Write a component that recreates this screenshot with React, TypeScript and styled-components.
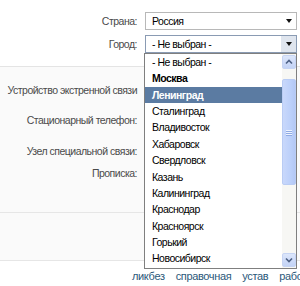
import React from "react";
import styled, { createGlobalStyle } from "styled-components";

const FONT = `Tahoma, "Liberation Sans", Arial, sans-serif`;

const Global = createGlobalStyle`
  html, body { margin: 0; padding: 0; background: #fff; }
  body { font-family: ${FONT}; }
`;

const Page = styled.div`
  position: relative;
  width: 300px;
  height: 286px;
  overflow: hidden;
  background: #fff;
  font-family: ${FONT};
  font-size: 10.5px;
  letter-spacing: -0.5px;
`;

const Top = styled.div`
  display: flex;
  flex-direction: column;
  gap: 5px;
  padding-top: 12px;
  height: 67px;
  box-sizing: border-box;
  border-bottom: 1px solid #e4e4e4;
`;

const Row = styled.div<{ $h?: number; $mt?: number }>`
  display: grid;
  grid-template-columns: 137px 152px;
  column-gap: 8px;
  align-items: center;
  height: ${(p) => (p.$h ? `${p.$h}px` : "auto")};
  margin-top: ${(p) => p.$mt ?? 0}px;
`;

const Label = styled.div`
  text-align: right;
  color: #4a4a4a;
  white-space: nowrap;
`;

const Select = styled.div<{ $open?: boolean }>`
  height: 18px;
  box-sizing: border-box;
  border: 1px solid ${(p) => (p.$open ? "#8a9bb3" : "#b8b8b8")};
  background: #fff;
  display: flex;
  align-items: center;
  justify-content: space-between;
  padding-left: 6px;
  color: #000;
`;

const Arrow = styled.div<{ $btn?: boolean }>`
  width: 15px;
  align-self: stretch;
  display: flex;
  align-items: center;
  justify-content: center;
  background: ${(p) => (p.$btn ? "#dfe5ee" : "transparent")};
  &::after {
    content: "";
    border-left: 3.5px solid transparent;
    border-right: 3.5px solid transparent;
    border-top: 4px solid #111;
  }
`;

const Lower = styled.div`
  background: #fafafa;
  display: flex;
  flex-direction: column;
`;

const Section = styled.div<{ $h: number; $line?: boolean }>`
  height: ${(p) => p.$h}px;
  box-sizing: border-box;
  border-bottom: ${(p) => (p.$line ? "1px solid #e6e6e6" : "none")};
  display: flex;
  flex-direction: column;
`;

const Footer = styled.div`
  background: #fff;
  height: 25px;
  display: flex;
  gap: 11px;
  padding-left: 132px;
  padding-top: 9px;
  box-sizing: border-box;
  white-space: nowrap;
  font-size: 11px;
  letter-spacing: -0.35px;
`;

const Link = styled.span`
  color: #2b587a;
`;

const List = styled.div`
  position: absolute;
  left: 144px;
  top: 53px;
  width: 153px;
  height: 216px;
  box-sizing: border-box;
  border: 1px solid #7f7f7f;
  background: #fff;
  display: flex;
`;

const Items = styled.div`
  flex: 1;
  display: flex;
  flex-direction: column;
`;

const Item = styled.div<{ $sel?: boolean; $bold?: boolean }>`
  height: 16.36px;
  line-height: 16.36px;
  padding-left: 7px;
  color: ${(p) => (p.$sel ? "#fff" : "#000")};
  background: ${(p) => (p.$sel ? "#5b7ba2" : "transparent")};
  font-weight: ${(p) => (p.$sel || p.$bold ? "bold" : "normal")};
  white-space: nowrap;
`;

const Scroll = styled.div`
  width: 14px;
  background: #f7f7f4;
  display: flex;
  flex-direction: column;
  align-items: stretch;
  padding: 1px 0;
  gap: 1px;
  box-sizing: border-box;
`;

const ScrollBtn = styled.div`
  height: 14px;
  border-radius: 2px;
  background: linear-gradient(#dce6fb, #c3d3f6);
  border: 1px solid #c6d4f3;
  box-sizing: border-box;
  display: flex;
  align-items: center;
  justify-content: center;
  svg { display: block; }
`;

const Track = styled.div`
  flex: 1;
  display: flex;
  flex-direction: column;
  padding-top: 9px;
`;

const Thumb = styled.div`
  height: 106px;
  border-radius: 2px;
  border: 1px solid #b9ccf4;
  background: linear-gradient(90deg, #c9d8fb, #bcd0fa 60%, #b4c8f5);
  box-sizing: border-box;
  display: flex;
  flex-direction: column;
  align-items: center;
  justify-content: center;
  gap: 1px;
`;

const Grip = styled.div`
  width: 6px;
  height: 1px;
  background: #eef3fe;
  box-shadow: 0 1px 0 #8faae4;
`;

const Chevron = ({ down }: { down?: boolean }) => (
  <svg width="8" height="6" viewBox="0 0 8 6">
    <path
      d={down ? "M1 1.5 L4 4.5 L7 1.5" : "M1 4.5 L4 1.5 L7 4.5"}
      stroke="#4d6185"
      strokeWidth="1.6"
      fill="none"
    />
  </svg>
);

const cities = [
  "- Не выбран -",
  "Москва",
  "Ленинград",
  "Сталинград",
  "Владивосток",
  "Хабаровск",
  "Свердловск",
  "Казань",
  "Калининград",
  "Краснодар",
  "Красноярск",
  "Горький",
  "Новосибирск",
];

export default function App() {
  return (
    <>
      <Global />
      <Page>
        <Top>
          <Row>
            <Label>Страна:</Label>
            <Select>
              Россия
              <Arrow />
            </Select>
          </Row>
          <Row>
            <Label>Город:</Label>
            <Select $open>
              - Не выбран -
              <Arrow $btn />
            </Select>
          </Row>
        </Top>
        <Lower>
          <Section $h={146} $line>
            <Row $h={18} $mt={14}>
              <Label>Устройство экстренной связи</Label>
            </Row>
            <Row $h={18} $mt={12}>
              <Label>Стационарный телефон:</Label>
            </Row>
            <Row $h={18} $mt={13}>
              <Label>Узел специальной связи:</Label>
            </Row>
            <Row $h={18} $mt={4}>
              <Label>Прописка:</Label>
            </Row>
          </Section>
          <Section $h={48} $line />
        </Lower>
        <Footer>
          <Link>ликбез</Link>
          <Link>справочная</Link>
          <Link>устав</Link>
          <Link>рабочие</Link>
        </Footer>
        <List>
          <Items>
            {cities.map((c, i) => (
              <Item key={c} $bold={i === 1} $sel={i === 2}>
                {c}
              </Item>
            ))}
          </Items>
          <Scroll>
            <ScrollBtn>
              <Chevron />
            </ScrollBtn>
            <Track>
              <Thumb>
                <Grip />
                <Grip />
                <Grip />
              </Thumb>
            </Track>
            <ScrollBtn>
              <Chevron down />
            </ScrollBtn>
          </Scroll>
        </List>
      </Page>
    </>
  );
}
